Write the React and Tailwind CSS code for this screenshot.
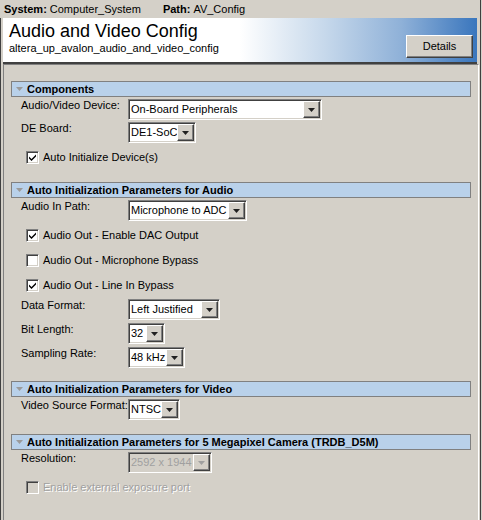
import React from "react";

const FONT = { fontFamily: '"Liberation Sans", Arial, sans-serif' };

function Arrow({ disabled }) {
  return (
    <svg width="7" height="4" viewBox="0 0 7 4">
      <path d="M0 0H7L3.5 4Z" fill={disabled ? "#a0a0a0" : "#202020"} />
    </svg>
  );
}

function Select({ value, width, disabled }) {
  return (
    <div
      className={`flex h-[21px] border border-t-[#808080] border-l-[#808080] border-b-white border-r-white shadow-[inset_1px_1px_0_#404040,inset_-1px_-1px_0_#d4d0c8] p-[1px] ${
        disabled ? "bg-[#d4d0c8]" : "bg-white"
      }`}
      style={{ width }}
    >
      <div
        className={`flex-1 flex items-center pl-[1px] text-[11px] leading-none whitespace-nowrap overflow-hidden ${
          disabled ? "text-[#a0a0a0]" : "text-black"
        }`}
      >
        {value}
      </div>
      <div className="w-[17px] h-full flex items-center justify-center bg-[#d4d0c8] border border-t-white border-l-white border-b-[#404040] border-r-[#404040] shadow-[inset_-1px_-1px_0_#808080]">
        <Arrow disabled={disabled} />
      </div>
    </div>
  );
}

function Field({ label, value, width, disabled, className = "" }) {
  return (
    <div className={`flex items-start pl-[17px] ${className}`}>
      <div className="w-[107px] text-[11px] leading-[13px] text-black">{label}</div>
      <Select value={value} width={width} disabled={disabled} />
    </div>
  );
}

function Check({ label, checked, disabled, className = "" }) {
  return (
    <div className={`flex items-center pl-[22px] h-[13px] ${className}`}>
      <div
        className={`w-[13px] h-[13px] flex items-center justify-center border border-t-[#808080] border-l-[#808080] border-b-white border-r-white shadow-[inset_1px_1px_0_#404040,inset_-1px_-1px_0_#d4d0c8] ${
          disabled ? "bg-[#d4d0c8]" : "bg-white"
        }`}
      >
        {checked && (
          <svg width="7" height="7" viewBox="0 0 7 7">
            <path d="M0 2.5L2.5 5L7 0.5V2.5L2.5 7L0 4.5Z" fill="#000" />
          </svg>
        )}
      </div>
      <span
        className={`ml-[4px] text-[11px] leading-[13px] ${
          disabled ? "text-[#a0a0a0] [text-shadow:1px_1px_0_#ffffff]" : "text-black"
        }`}
      >
        {label}
      </span>
    </div>
  );
}

function Section({ title, className = "" }) {
  return (
    <div
      className={`mx-[7px] h-[16px] flex items-center bg-[#b9d1ea] border border-[#808080] ${className}`}
    >
      <svg width="7" height="4" viewBox="0 0 7 4" className="ml-[4px]">
        <path d="M0 0H7L3.5 4Z" fill="#9a9a9a" />
      </svg>
      <span className="ml-[4px] text-[11px] font-bold leading-none text-black">{title}</span>
    </div>
  );
}

export default function App() {
  return (
    <div className="w-[482px] h-[520px] bg-[#d4d0c8] flex flex-col overflow-hidden" style={FONT}>
      <div className="w-[481px] h-[18px] flex items-center pl-[4px] text-[11px] text-black border-r border-[#404040]">
        <span className="font-bold">System:</span>
        <span className="ml-[3px]">Computer_System</span>
        <span className="font-bold ml-[22px]">Path:</span>
        <span className="ml-[3px]">AV_Config</span>
      </div>

      <div className="w-[481px] flex-1 flex flex-col border-l border-r border-[#404040]">
        <div className="ml-[2px] mr-[3px] h-[46px] flex justify-between border-b-2 border-[#404040] bg-[linear-gradient(to_right,#ffffff_50%,#c6d8eb_68%,#8fb1d8_84%,#3a76bd)]">
          <div className="pl-[6px] pt-[2px]">
            <div className="text-[18px] leading-[22px] text-black">Audio and Video Config</div>
            <div className="text-[11px] leading-[13px] text-black">
              altera_up_avalon_audio_and_video_config
            </div>
          </div>
          <div className="flex items-end pb-[4px] pr-[4px]">
            <button className="w-[67px] h-[23px] text-[11px] text-black bg-[#d4d0c8] border border-t-white border-l-white border-b-[#404040] border-r-[#404040] shadow-[inset_-1px_-1px_0_#808080]">
              Details
            </button>
          </div>
        </div>

        <div className="flex-1 ml-[2px] mr-[1px] border-l border-t border-[#808080] border-r-white border-r pt-[16px]">
          <Section title="Components" />
          <Field className="mt-[2px]" label="Audio/Video Device:" value="On-Board Peripherals" width={194} />
          <Field className="mt-[2px]" label="DE Board:" value="DE1-SoC" width={68} />
          <Check className="mt-[8px]" label="Auto Initialize Device(s)" checked />

          <Section className="mt-[18px]" title="Auto Initialization Parameters for Audio" />
          <Field className="mt-[2px]" label="Audio In Path:" value="Microphone to ADC" width={119} />
          <Check className="mt-[8px]" label="Audio Out - Enable DAC Output" checked />
          <Check className="mt-[12px]" label="Audio Out - Microphone Bypass" />
          <Check className="mt-[12px]" label="Audio Out - Line In Bypass" checked />
          <Field className="mt-[7px]" label="Data Format:" value="Left Justified" width={92} />
          <Field className="mt-[3px]" label="Bit Length:" value="32" width={37} />
          <Field className="mt-[3px]" label="Sampling Rate:" value="48 kHz" width={57} />

          <Section className="mt-[13px]" title="Auto Initialization Parameters for Video" />
          <Field className="mt-[2px]" label="Video Source Format:" value="NTSC" width={52} />

          <Section className="mt-[14px]" title="Auto Initialization Parameters for 5 Megapixel Camera (TRDB_D5M)" />
          <Field className="mt-[2px]" label="Resolution:" value="2592 x 1944" width={84} disabled />
          <Check className="mt-[8px]" label="Enable external exposure port" disabled />
        </div>
      </div>
    </div>
  );
}
